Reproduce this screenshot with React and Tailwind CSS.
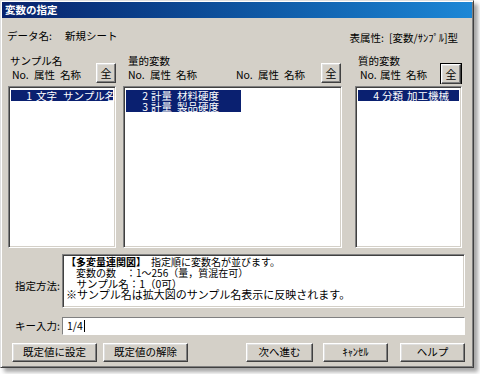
import React from 'react';

const raised =
  'bg-[#d4d0c8] border border-t-[#ffffff] border-l-[#ffffff] border-r-[#404040] border-b-[#404040] shadow-[inset_-1px_-1px_0_#808080,inset_1px_1px_0_#dfdfdf]';
const sunken =
  'bg-white border border-t-[#808080] border-l-[#808080] border-r-[#ffffff] border-b-[#ffffff] shadow-[inset_1px_1px_0_#404040,inset_-1px_-1px_0_#d4d0c8]';

function HeadCols({ first = 22 }) {
  return (
    <>
      <span className="inline-block" style={{ width: first }}>No.</span>
      <span className="inline-block w-[26px]">属性</span>
      <span className="inline-block">名称</span>
    </>
  );
}

function AllButton({ focused }) {
  return (
    <div className={focused ? 'border border-black' : ''}>
      <button
        className={`${raised} w-[20px] h-[20px] flex items-center justify-center text-[11px] leading-none`}
      >
        全
      </button>
    </div>
  );
}

function Row({ no, kind, name, numW, kindML, kindW, width }) {
  return (
    <div
      className="flex h-[11px] leading-[11px] bg-[#0a2070] text-white whitespace-nowrap"
      style={width ? { width } : undefined}
    >
      <span className="inline-block text-right shrink-0" style={{ width: numW }}>{no}</span>
      <span className="inline-block shrink-0" style={{ marginLeft: kindML, width: kindW }}>{kind}</span>
      <span className="inline-block">{name}</span>
    </div>
  );
}

function Btn({ children, w }) {
  return (
    <button
      className={`${raised} h-[19px] flex items-center justify-center text-[10.5px] leading-none`}
      style={{ width: w }}
    >
      {children}
    </button>
  );
}

export default function App() {
  return (
    <div className="w-[480px] h-[374px] bg-white font-['Noto_Sans_CJK_JP',sans-serif] text-black text-[10.5px]">
      <div className="w-[474px] h-[368px] bg-[#d4d0c8] border border-t-[#dfdfdf] border-l-[#dfdfdf] border-r-[#404040] border-b-[#404040] shadow-[inset_1px_1px_0_#ffffff,inset_-1px_-1px_0_#808080,4px_4px_4px_rgba(0,0,0,0.35)] flex flex-col">
        {/* title */}
        <div className="mx-[1px] mt-[1px] h-[16px] bg-linear-to-r from-[#08216b] to-[#1c87d6] flex items-center pl-[3px] text-white text-[10.5px] font-bold leading-none">
          変数の指定
        </div>

        {/* data name / table attr */}
        <div className="mt-[12px] flex items-start justify-between pr-[15px]">
          <div className="flex ml-[6px] leading-[12px]">
            <span className="w-[58px]">データ名:</span>
            <span>新規シート</span>
          </div>
          <div className="flex mt-[2px] leading-[12px] gap-[5px]">
            <span>表属性:</span>
            <span>[変数/ｻﾝﾌﾟﾙ]型</span>
          </div>
        </div>

        {/* three lists */}
        <div className="mt-[11px] ml-[7px] flex">
          {/* sample */}
          <div className="w-[108px] flex flex-col">
            <div className="pl-[2px] leading-[12px] h-[12px]">サンプル名</div>
            <div className="-mt-[4px] h-[21px] flex justify-between">
              <div className="pl-[4px] mt-[6px] leading-[12px] whitespace-nowrap">
                <HeadCols />
              </div>
              <AllButton />
            </div>
            <div className={`${sunken} mt-[2px] h-[162px] p-[2px] pt-[3px] overflow-hidden`}>
              <Row no="1" kind="文字" name="サンプル名" numW={21} kindML={4} kindW={27} />
            </div>
          </div>

          {/* quantitative */}
          <div className="ml-[7px] w-[219px] flex flex-col">
            <div className="pl-[5px] leading-[12px] h-[12px]">量的変数</div>
            <div className="-mt-[4px] h-[21px] flex justify-between pr-[1px]">
              <div className="pl-[5px] mt-[6px] leading-[12px] whitespace-nowrap flex">
                <div className="w-[108px]">
                  <HeadCols />
                </div>
                <div>
                  <HeadCols />
                </div>
              </div>
              <AllButton />
            </div>
            <div className={`${sunken} mt-[2px] h-[162px] p-[2px] pt-[3px]`}>
              <Row no="2" kind="計量" name="材料硬度" numW={22} kindML={3} kindW={26} width={115} />
              <Row no="3" kind="計量" name="製品硬度" numW={22} kindML={3} kindW={26} width={115} />
            </div>
          </div>

          {/* qualitative */}
          <div className="ml-[13px] w-[107px] flex flex-col">
            <div className="pl-[3px] leading-[12px] h-[12px]">質的変数</div>
            <div className="-mt-[4px] h-[21px] flex justify-between">
              <div className="pl-[5px] mt-[6px] leading-[12px] whitespace-nowrap">
                <HeadCols first={20} />
              </div>
              <AllButton focused />
            </div>
            <div className={`${sunken} mt-[2px] h-[162px] p-[2px] pt-[3px]`}>
              <Row no="4" kind="分類" name="加工機械" numW={21} kindML={3} kindW={25} />
            </div>
          </div>
        </div>

        {/* method */}
        <div className="mt-[6px] flex">
          <div className="ml-[14px] w-[47px] flex items-center pt-[10px] whitespace-nowrap">指定方法:</div>
          <div className={`${sunken} w-[403px] h-[54px] pl-[3px] pt-[1px]`}>
            <div className="whitespace-nowrap">
              <div className="leading-[11px] text-[10px]">
                <span className="font-bold">【多変量連関図】</span>
                <span>　指定順に変数名が並びます。</span>
              </div>
              <div className="leading-[11px] text-[10px]">　変数の数　：1～256（量，質混在可）</div>
              <div className="leading-[11px] text-[10.5px]">　サンプル名：1（0可）</div>
              <div className="leading-[11px] text-[11px]">※サンプル名は拡大図のサンプル名表示に反映されます。</div>
            </div>
          </div>
        </div>

        {/* key input */}
        <div className="mt-[9px] flex items-center">
          <div className="ml-[14px] w-[47px] whitespace-nowrap">キー入力:</div>
          <div className="w-[403px] h-[18px] bg-white border border-t-[#808080] border-l-[#808080] border-r-[#ffffff] border-b-[#ffffff] flex items-center pl-[4px] leading-none">
            <span>1/4</span>
            <span className="inline-block w-[1px] h-[12px] bg-black ml-[1px]" />
          </div>
        </div>

        {/* buttons */}
        <div className="mt-[8px] flex ml-[11px]">
          <Btn w={85}>既定値に設定</Btn>
          <div className="ml-[6px]">
            <Btn w={85}>既定値の解除</Btn>
          </div>
          <div className="ml-[58px]">
            <Btn w={67}>次へ進む</Btn>
          </div>
          <div className="ml-[10px]">
            <Btn w={65}>ｷｬﾝｾﾙ</Btn>
          </div>
          <div className="ml-[12px]">
            <Btn w={65}>ヘルプ</Btn>
          </div>
        </div>
      </div>
    </div>
  );
}
